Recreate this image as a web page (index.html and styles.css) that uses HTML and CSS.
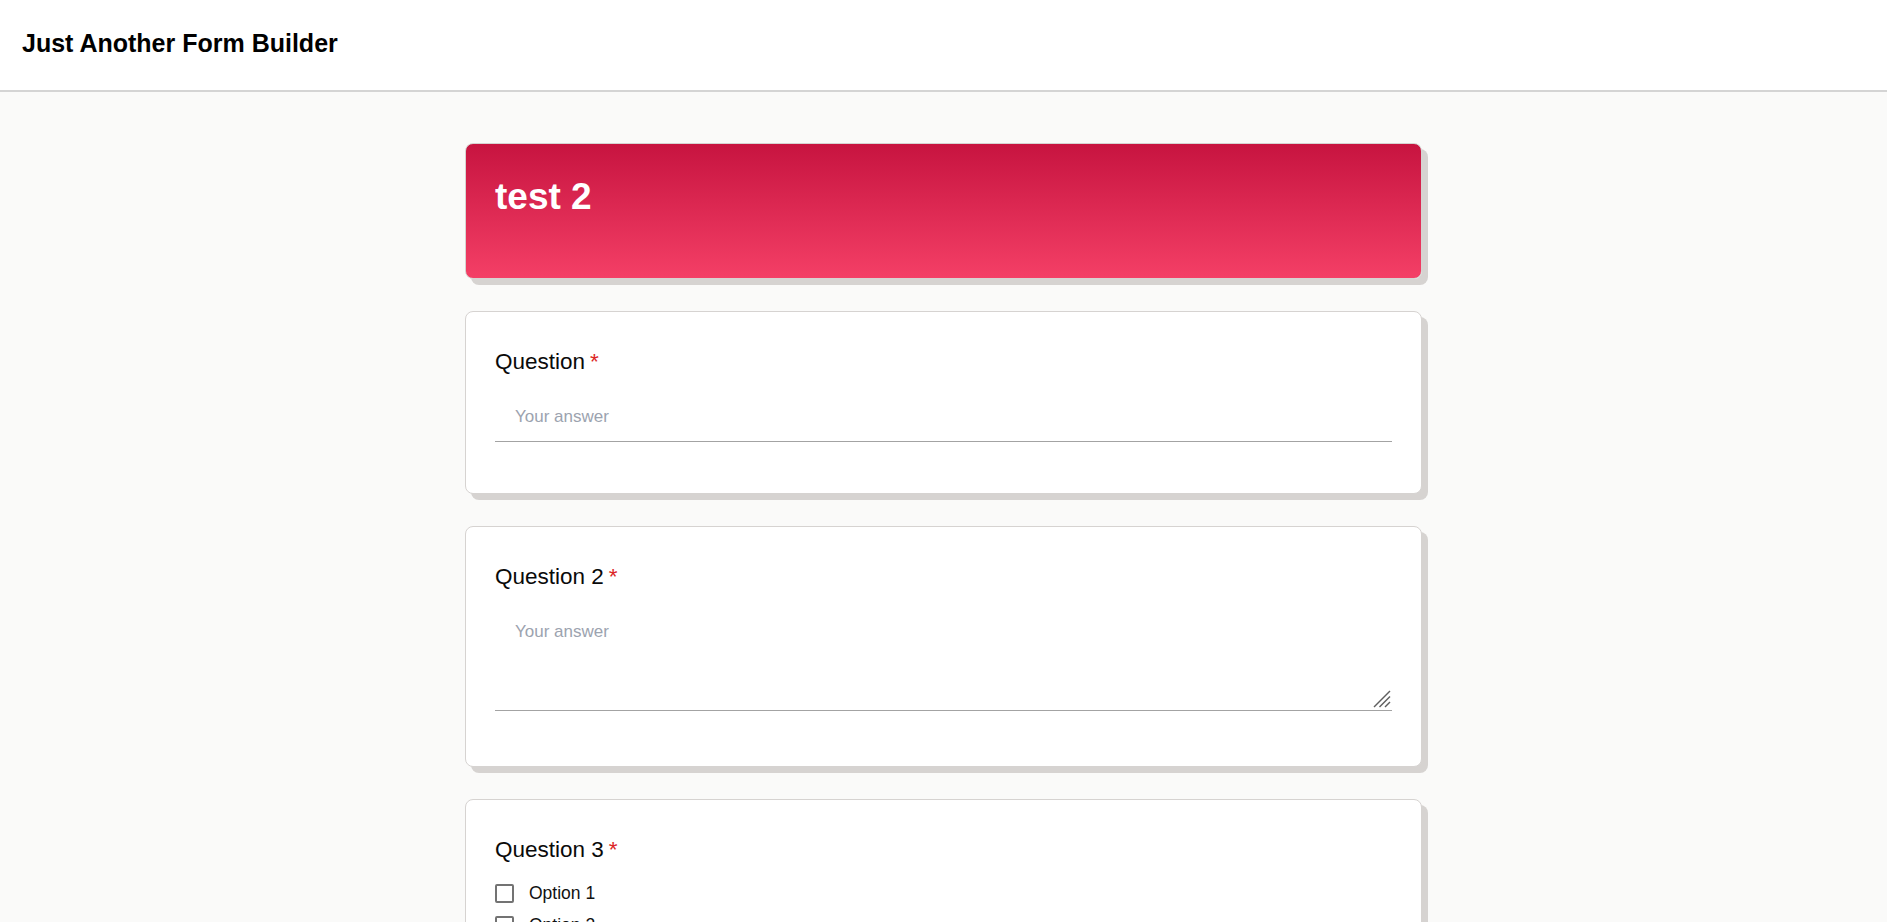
FILE: index.html
```html
<!DOCTYPE html>
<html lang="en">
<head>
<meta charset="utf-8">
<title>Just Another Form Builder</title>
<link rel="stylesheet" href="styles.css">
</head>
<body>
<header class="topbar">
  <h1 class="brand">Just Another Form Builder</h1>
</header>
<main class="page">
  <section class="card card-hero">
    <h2 class="form-title">test 2</h2>
  </section>
  <section class="card">
    <label class="q-label" for="q1">Question<span class="req">*</span></label>
    <input id="q1" class="answer" type="text" placeholder="Your answer">
  </section>
  <section class="card">
    <label class="q-label" for="q2">Question 2<span class="req">*</span></label>
    <div class="long-wrap">
      <textarea id="q2" class="answer answer-long" placeholder="Your answer"></textarea>
      <svg class="resizer" width="18" height="18" viewBox="0 0 18 18" aria-hidden="true">
        <line x1="1" y1="17" x2="17" y2="1" />
        <line x1="6.5" y1="17" x2="17" y2="6.5" />
        <line x1="12" y1="17" x2="17" y2="12" />
      </svg>
    </div>
  </section>
  <section class="card">
    <div class="q-label">Question 3<span class="req">*</span></div>
    <div class="options">
      <label class="option"><span class="box"></span><span>Option 1</span></label>
      <label class="option"><span class="box"></span><span>Option 2</span></label>
      <label class="option"><span class="box"></span><span>Option 3</span></label>
    </div>
  </section>
</main>
</body>
</html>
```

FILE: styles.css
```css
* { box-sizing: border-box; }
html, body { margin: 0; padding: 0; }
body {
  background: #fafaf9;
  font-family: "Liberation Sans", Arial, sans-serif;
  color: #0a0a0a;
}
.topbar {
  height: 92px;
  background: #ffffff;
  border-bottom: 2px solid #d4d4d4;
  display: flex;
  align-items: center;
  padding: 0 22px 4px;
}
.brand {
  margin: 0;
  font-size: 25px;
  font-weight: 700;
  color: #000;
}
.page {
  width: 957px;
  margin: 0 auto;
  padding-top: 51px;
  display: flex;
  flex-direction: column;
  gap: 32px;
  padding-bottom: 40px;
}
.card {
  background: #ffffff;
  border: 1px solid #d6d3d1;
  border-radius: 8px;
  box-shadow: 6px 6px 0 #d6d3d1;
  padding: 34px 29px 51px;
  display: flex;
  flex-direction: column;
}
.card-hero {
  background: linear-gradient(to bottom, #c71440, #f43f66);
  padding: 33px 29px 61px;
}
.form-title {
  margin: 0;
  font-size: 37px;
  line-height: 40px;
  font-weight: 700;
  color: #ffffff;
}
.q-label {
  font-size: 22.5px;
  line-height: 32px;
  color: #0a0a0a;
}
.req {
  color: #dc2626;
  margin-left: 5px;
}
.answer {
  margin-top: 15px;
  width: 100%;
  border: none;
  border-bottom: 1px solid #a3a3a3;
  background: transparent;
  font-family: "Liberation Sans", Arial, sans-serif;
  font-size: 17px;
  line-height: 24px;
  padding: 12px 20px 12px;
  height: 49px;
  color: #111;
  outline: none;
}
.answer::placeholder { color: #9ca3af; }
.long-wrap {
  position: relative;
  margin-bottom: 4px;
}
.answer-long {
  height: 103px;
  resize: none;
  display: block;
}
.resizer {
  position: absolute;
  right: 1px;
  bottom: 3px;
  stroke: #5f5f5f;
  stroke-width: 1.4;
}
.options {
  margin-top: 14px;
  display: flex;
  flex-direction: column;
  gap: 6px;
}
.option {
  display: flex;
  align-items: center;
  gap: 15px;
  height: 26px;
  font-size: 17.5px;
  color: #111;
}
.box {
  width: 19px;
  height: 19px;
  border: 2px solid #737373;
  border-radius: 2px;
  background: #fff;
  flex: none;
}
```
